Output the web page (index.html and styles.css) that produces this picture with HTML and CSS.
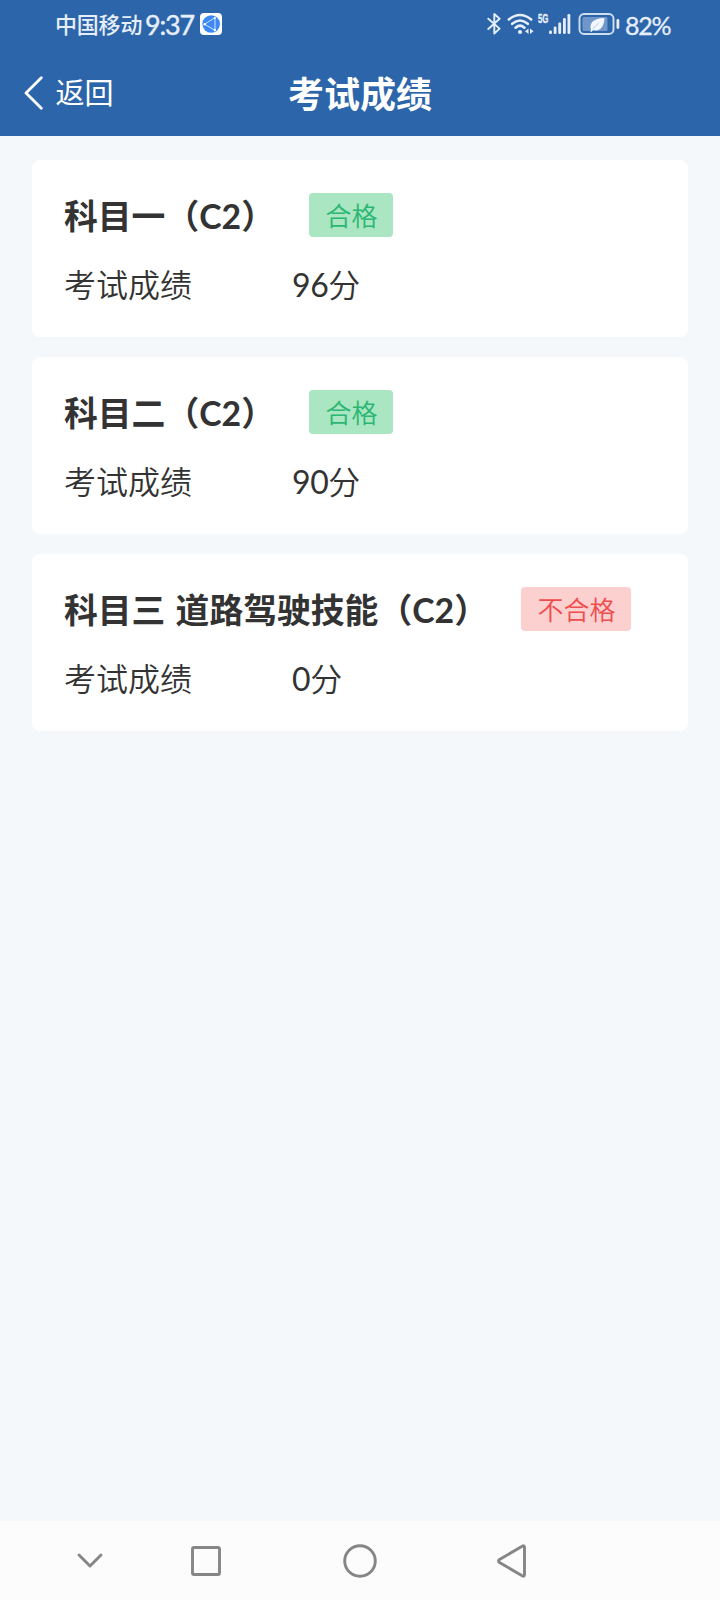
FILE: index.html
```html
<!DOCTYPE html>
<html lang="zh-CN">
<head>
<meta charset="utf-8">
<title>考试成绩</title>
<link rel="stylesheet" href="styles.css">
</head>
<body>
<div class="screen">
  <div class="status">
    <div class="status-left">
      <span class="carrier">中国移动</span>
      <span class="clock">9:37</span>
      <svg class="app" width="22" height="22" viewBox="0 0 22 22">
        <rect width="22" height="22" rx="4" fill="#fff"/>
        <circle cx="11.2" cy="11" r="8.8" fill="#3c88f4"/>
        <path d="M4.5 11.2L14.5 5M4.5 11.2L14.5 17M15 5v12" fill="none" stroke="#cfe3ff" stroke-width="1"/>
        <circle cx="4.7" cy="11.2" r="1.2" fill="#fff"/><circle cx="14.8" cy="5" r="1.1" fill="#fff"/><circle cx="14.8" cy="17" r="1.2" fill="#fff"/>
      </svg>
    </div>
    <div class="status-right">
      <svg class="bt" width="15" height="24" viewBox="0 0 15 24" fill="none" stroke="#e6eefa" stroke-width="1.9" stroke-linejoin="round" stroke-linecap="round"><path d="M1.3 6.7L12.6 16.6L7.3 21.5V2L12.6 6.8L1.3 17"/></svg>
      <svg class="wifi" width="28" height="24" viewBox="0 0 28 24" fill="none" stroke="#e6eefa" stroke-width="2.6" stroke-linecap="round">
        <path d="M1.8 7.5Q13 -1.5 24.2 7.5M5.2 11.8Q13 5.2 20.8 11.8M8.6 15.7Q13 11.7 17.4 15.7"/>
        <circle cx="13" cy="20" r="2.1" fill="#e6eefa" stroke="none"/>
        <path d="M21.500 16.500v5.600l-3.500-2.800zM23 16.500v5.600l3.500-2.800z" fill="#e6eefa" stroke="none"/>
      </svg>
      <span class="gen">5G</span>
      <svg class="signal" width="22" height="22" viewBox="0 0 22 22" fill="#e6eefa"><rect y="17.500" width="3" height="3.500" rx="1.200"/><rect x="4.700" y="13.500" width="2.800" height="7.500" rx="1.200"/><rect x="9.300" y="9.500" width="2.800" height="11.500" rx="1.200"/><rect x="14" y="5" width="2.800" height="16" rx="1.200"/><rect x="18.500" y="1" width="2.800" height="20" rx="1.200"/></svg>
      <svg class="battery" width="42" height="24" viewBox="0 0 42 24">
        <rect x="1.500" y="2" width="34" height="20" rx="4.500" fill="none" stroke="#cfdff2" stroke-width="1.900"/>
        <rect x="4.500" y="5" width="25" height="14" rx="1.500" fill="#7097ca"/>
        <path d="M13 17.800C11 11 15 6.500 26.500 6C26 15 22 20 15 18L13.500 20L12.300 19.500Z" fill="#f2f7ff"/>
        <path d="M14.500 17L21 10.800" fill="none" stroke="#a9c2e2" stroke-width=".8"/>
        <rect x="38.500" y="7" width="2.800" height="10" rx="1.400" fill="#e6eefa"/>
      </svg>
      <span class="percent">82%</span>
    </div>
  </div>
  <header class="header">
    <div class="back">
      <svg width="20" height="34" viewBox="0 0 20 34" fill="none" stroke="#fff" stroke-width="2.800" stroke-linecap="round" stroke-linejoin="round"><path d="M17.300 1.800L2 17L17.300 32.200"/></svg>
      <span>返回</span>
    </div>
    <h1 class="heading">考试成绩</h1>
  </header>
  <main class="list">
    <section class="card">
      <div class="card-head"><h2 class="subject">科目一（C2）</h2><span class="badge pass">合格</span></div>
      <div class="row"><span class="label">考试成绩</span><span class="value">96分</span></div>
    </section>
    <section class="card">
      <div class="card-head"><h2 class="subject">科目二（C2）</h2><span class="badge pass">合格</span></div>
      <div class="row"><span class="label">考试成绩</span><span class="value">90分</span></div>
    </section>
    <section class="card">
      <div class="card-head"><h2 class="subject">科目三 道路驾驶技能（C2）</h2><span class="badge fail">不合格</span></div>
      <div class="row"><span class="label">考试成绩</span><span class="value">0分</span></div>
    </section>
  </main>
  <nav class="nav">
    <svg class="n1" width="28" height="18" viewBox="0 0 28 18"><path d="M3 3L14 14L25 3"/></svg>
    <svg class="n2" width="32" height="32" viewBox="0 0 32 32"><rect x="2.500" y="2.500" width="27" height="27" rx="1.500"/></svg>
    <svg class="n3" width="34" height="34" viewBox="0 0 34 34"><circle cx="17" cy="17" r="15.300"/></svg>
    <svg class="n4" width="32" height="36" viewBox="0 0 32 36"><path d="M26.200 3.200Q28.500 2 28.500 4.500V31.500Q28.500 34 26.200 32.800L3.500 19.500Q1.500 18 3.500 16.500Z"/></svg>
  </nav>
</div>
</body>
</html>
```
FILE: styles.css
```css
* { box-sizing: border-box; }
body { margin: 0; font-family: Lato, "Noto Sans CJK SC", sans-serif; color: #333; }
h1, h2 { margin: 0; }
svg { display: block; flex: none; }
.screen { width: 720px; height: 1600px; display: flex; flex-direction: column; background: #f4f8fa; white-space: nowrap; }
.status { height: 50px; background: #2c65a9; color: #e6eefa; display: flex; justify-content: space-between; padding: 0 51px 2px 55px; }
.status-left, .status-right { display: flex; align-items: center; }
.carrier { font-size: 22px; line-height: 48px; width: 90px; letter-spacing: -.2px; font-weight: 500; padding-top: 2px; }
.clock { font-size: 27px; line-height: 48px; width: 55px; letter-spacing: -1.2px; font-weight: 400; padding-top: 2px; -webkit-text-stroke: .4px; }
.bt { margin-right: 5px; }
.wifi { margin-right: 3px; }
.gen { font: bold 13px/14px "Liberation Sans", sans-serif; width: 11px; align-self: flex-start; margin-top: 12px; transform: scaleX(.6); transform-origin: left; -webkit-text-stroke: .4px; }
.signal { margin-right: 7px; }
.battery { margin-right: 5px; }
.percent { font-size: 25px; line-height: 48px; width: 44px; letter-spacing: -1.2px; padding-top: 1px; -webkit-text-stroke: .3px; }
.header { height: 86px; background: #2c65a9; color: #fff; display: grid; grid-template-columns: 1fr auto 1fr; align-items: center; padding-bottom: 1px; }
.back { display: flex; align-items: center; gap: 11.5px; padding-left: 24px; font-size: 29px; line-height: 40px; }
.heading { font-size: 36px; line-height: 48px; font-weight: 700; padding-top: 2px; }
.list { flex: 1; display: flex; flex-direction: column; gap: 20px; padding: 24px 32px; }
.card { height: 177px; background: #fff; border-radius: 8px; padding: 33px 32px 0; }
.card-head { height: 44px; display: flex; align-items: center; gap: 33.5px; }
.subject { font-size: 33.8px; line-height: 42px; font-weight: 700; word-spacing: 2px; padding-top: 2px; }
.badge { height: 44px; padding: 1px 16px 0; border-radius: 4px; font-size: 26px; line-height: 44px; font-family: Lato, "Noto Sans CJK SC DemiLight", "Noto Sans CJK SC", sans-serif; font-weight: 350; }
.card-head .pass { margin-left: 1px; }
.pass { background: #a9e6c1; color: #2bb673; }
.fail { background: #fdd0d0; color: #ee4e4e; }
.row { display: flex; margin-top: 26px; font-size: 32px; line-height: 44px; }
.label { width: 228px; font-family: Lato, "Noto Sans CJK SC DemiLight", "Noto Sans CJK SC", sans-serif; font-weight: 400; }
.value { font-family: Lato, "Noto Sans CJK SC DemiLight", "Noto Sans CJK SC", sans-serif; font-weight: 400; letter-spacing: -.4px; }
.nav { height: 79px; background: #fcfcfc; display: flex; align-items: center; }
.nav svg { fill: none; stroke: #868686; stroke-width: 2.9; stroke-linecap: round; stroke-linejoin: round; }
.n1 { margin-left: 76px; }
.n2 { margin-left: 86px; }
.n3 { margin-left: 121px; }
.n4 { margin-left: 119px; }
```
